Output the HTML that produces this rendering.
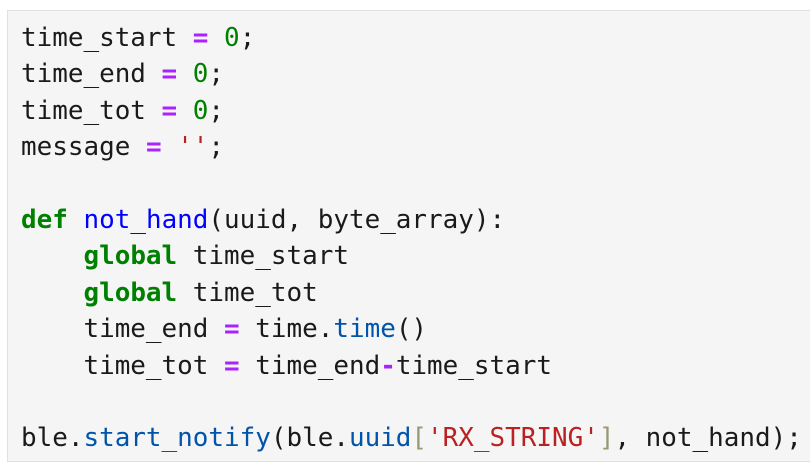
<!DOCTYPE html>
<html><head><meta charset="utf-8"><style>
html,body{margin:0;padding:0;background:#fff;width:810px;height:470px;overflow:hidden}
.box{position:absolute;left:7px;top:10px;width:820px;height:452px;background:#f5f5f5;border:1px solid #e0e0e0;box-sizing:border-box}
pre{position:absolute;left:21px;top:20px;margin:0;font-family:"DejaVu Sans Mono","Liberation Mono",monospace;font-size:25.95px;line-height:36.4px;color:#1a1a1a}
.o{color:#aa22ff;font-weight:bold}.n{color:#008000}.s{color:#ba2121}.k{color:#008000;font-weight:bold}.f{color:#0000ff}.a{color:#0055aa}.b{color:#999977}
</style></head><body><div class="box"></div><pre>time_start <span class="o">=</span> <span class="n">0</span>;
time_end <span class="o">=</span> <span class="n">0</span>;
time_tot <span class="o">=</span> <span class="n">0</span>;
message <span class="o">=</span> <span class="s">''</span>;

<span class="k">def</span> <span class="f">not_hand</span>(uuid, byte_array):
    <span class="k">global</span> time_start
    <span class="k">global</span> time_tot
    time_end <span class="o">=</span> time.<span class="a">time</span>()
    time_tot <span class="o">=</span> time_end<span class="o">-</span>time_start

ble.<span class="a">start_notify</span>(ble.<span class="a">uuid</span><span class="b">[</span><span class="s">'RX_STRING'</span><span class="b">]</span>, not_hand);</pre></body></html>
